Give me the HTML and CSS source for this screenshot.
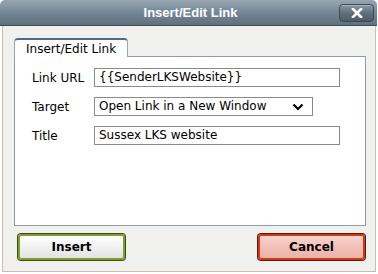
FILE: index.html
```html
<!DOCTYPE html>
<html lang="en">
<head>
    <meta charset="UTF-8">
    <title>Insert/Edit Link</title>
    <link rel="stylesheet" href="styles.css">
</head>
<body>
    <div class="dialog">
        <div class="titlebar">
            <span class="title">Insert/Edit Link</span>
            <button class="close" title="Close">
                <svg width="12" height="10" viewBox="0 0 12 10"><path d="M2 1 L10 9 M10 1 L2 9" stroke="#fff" stroke-width="2.6" stroke-linecap="square"/></svg>
            </button>
        </div>
        <div class="body">
            <div class="tabs">
                <span class="tab">Insert/Edit Link</span>
            </div>
            <div class="panel">
                <div class="row">
                    <label>Link URL</label>
                    <div class="field wide">{{SenderLKSWebsite}}</div>
                </div>
                <div class="row">
                    <label>Target</label>
                    <div class="field select">
                        <span>Open Link in a New Window</span>
                        <svg width="12" height="8" viewBox="0 0 12 8"><path d="M1.5 1.5 L6 6 L10.5 1.5" fill="none" stroke="#000" stroke-width="2.2"/></svg>
                    </div>
                </div>
                <div class="row">
                    <label>Title</label>
                    <div class="field wide">Sussex LKS website</div>
                </div>
            </div>
            <div class="buttons">
                <button class="btn insert">Insert</button>
                <button class="btn cancel">Cancel</button>
            </div>
        </div>
    </div>
</body>
</html>
```

FILE: styles.css
```css
body{
    margin:0;
    background:#fff;
    font-family:"DejaVu Sans", Verdana, sans-serif;
    font-size:12px;
    color:#000;
}
.dialog{
    width:377px;
    height:272px;
    display:flex;
    flex-direction:column;
}
.titlebar{
    height:25px;
    border-bottom:1px solid #3f4d58;
    border-radius:5px 5px 0 0;
    background:linear-gradient(#97a6b1, #77899a 45%, #5f707d);
    display:flex;
    align-items:center;
    justify-content:center;
    position:relative;
}
.title{
    font-family:"Liberation Sans", Arial, sans-serif;
    font-weight:bold;
    font-size:13px;
    color:#fff;
    margin-left:4px;
}
.close{
    position:absolute;
    right:3px;
    top:4px;
    width:35px;
    height:18px;
    padding:0;
    border:1px solid #3c4852;
    border-radius:4px;
    background:linear-gradient(#8795a0, #5f6d78 55%, #505d67);
    box-shadow:inset 0 1px 0 rgba(255,255,255,0.3);
    display:flex;
    align-items:center;
    justify-content:center;
}
.body{
    flex:1;
    margin:0 1px 0 2px;
    border:1px solid #cbbfb3;
    border-top:none;
    background:#f0f0ee;
    padding:12px 8px 0 11px;
}
.tabs{
    display:flex;
}
.tab{
    height:19px;
    width:114px;
    box-sizing:border-box;
    border:1px solid #9aa7b0;
    border-top:2px solid #4e6d8a;
    border-bottom:none;
    border-radius:4px 4px 0 0;
    background:#fff;
    padding:1px 0 0 11px;
    line-height:16px;
    margin-bottom:-1px;
    position:relative;
}
.panel{
    width:352px;
    height:170px;
    box-sizing:border-box;
    border:1px solid #8e9da4;
    background:#fff;
    padding:11px 0 0 17px;
}
.row{
    display:flex;
    align-items:center;
    height:19px;
    margin-bottom:10px;
}
.row label{
    width:62px;
}
.field{
    height:19px;
    box-sizing:border-box;
    border:1px solid #8a8a8a;
    padding:0 4px;
    line-height:17px;
    white-space:nowrap;
}
.wide{
    width:246px;
}
.select{
    width:219px;
    display:flex;
    justify-content:space-between;
    align-items:center;
    padding-right:8px;
}
.buttons{
    display:flex;
    justify-content:space-between;
    padding:8px 2px 0 4px;
}
.btn{
    width:107px;
    height:26px;
    font-family:"DejaVu Sans", Verdana, sans-serif;
    font-weight:bold;
    font-size:12px;
    color:#000;
    border-radius:3px;
    padding:0;
}
.insert{
    border:2px solid #819c2c;
    box-shadow:0 0 0 1px #3f4a1c;
    background:linear-gradient(#ffffff, #f1f1f1 50%, #e2e2e2);
}
.cancel{
    border:2px solid #cc3a18;
    box-shadow:0 0 0 1px #561808;
    background:linear-gradient(#f8d4ce, #f2c0b8 50%, #ecb2a9);
}
```
